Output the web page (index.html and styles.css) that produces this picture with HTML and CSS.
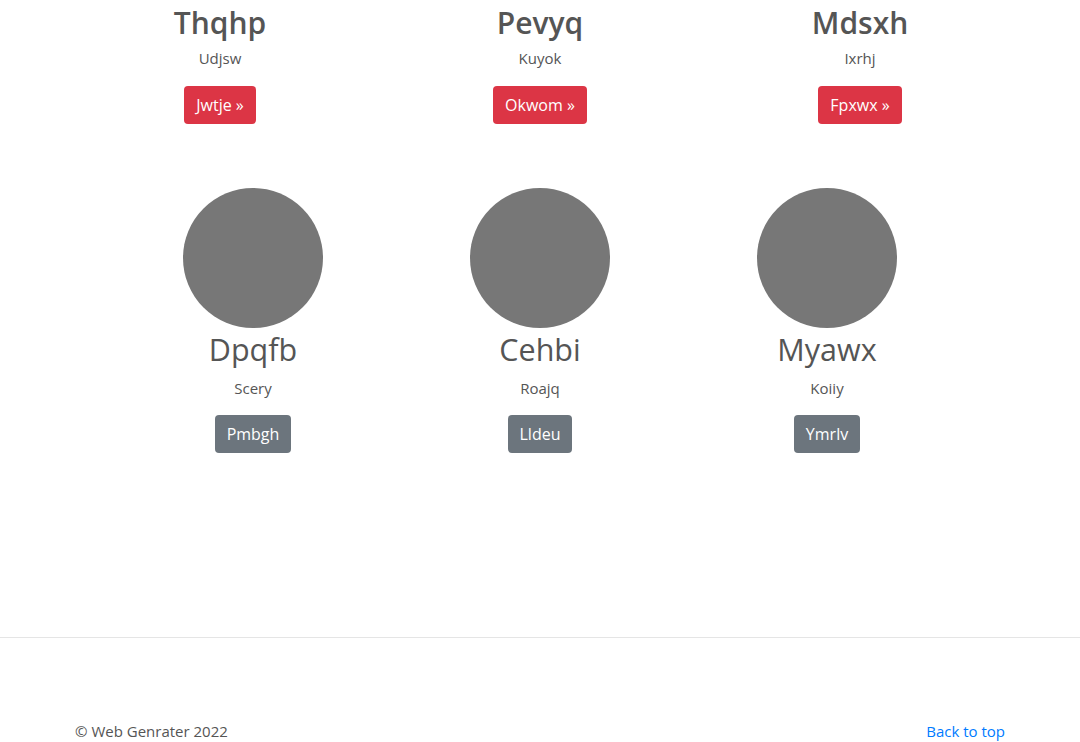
FILE: index.html
```html
<!DOCTYPE html>
<html lang="en">
<head>
<meta charset="utf-8">
<title>Web Genrater</title>
<link rel="stylesheet" href="styles.css">
</head>
<body>
<main>
  <div class="container">
    <div class="row top-row">
      <div class="col">
        <h2 class="title">Thqhp</h2>
        <p class="sub">Udjsw</p>
        <a class="btn btn-danger" href="#">Jwtje &raquo;</a>
      </div>
      <div class="col">
        <h2 class="title">Pevyq</h2>
        <p class="sub">Kuyok</p>
        <a class="btn btn-danger" href="#">Okwom &raquo;</a>
      </div>
      <div class="col">
        <h2 class="title">Mdsxh</h2>
        <p class="sub">Ixrhj</p>
        <a class="btn btn-danger" href="#">Fpxwx &raquo;</a>
      </div>
    </div>
    <div class="row marketing">
      <div class="mcol">
        <div class="avatar"></div>
        <h2 class="mtitle">Dpqfb</h2>
        <p class="sub">Scery</p>
        <a class="btn btn-secondary" href="#">Pmbgh</a>
      </div>
      <div class="mcol">
        <div class="avatar"></div>
        <h2 class="mtitle">Cehbi</h2>
        <p class="sub">Roajq</p>
        <a class="btn btn-secondary" href="#">Lldeu</a>
      </div>
      <div class="mcol">
        <div class="avatar"></div>
        <h2 class="mtitle">Myawx</h2>
        <p class="sub">Koiiy</p>
        <a class="btn btn-secondary" href="#">Ymrlv</a>
      </div>
    </div>
  </div>
  <hr class="divider">
  <footer class="footer">
    <p class="copy">&copy; Web Genrater 2022</p>
    <a class="totop" href="#">Back to top</a>
  </footer>
</main>
</body>
</html>
```
FILE: styles.css
```css
* { box-sizing: border-box; }
html, body { margin: 0; padding: 0; }
body {
  font-family: "Open Sans", "Noto Sans", "Liberation Sans", sans-serif;
  font-size: 16px;
  line-height: 1.5;
  color: #555;
  background: #fff;
}
.container {
  width: 960px;
  margin: 0 auto;
  padding: 0 15px;
}
.row { display: flex; }
.top-row { margin: 0 -15px; }
.col {
  flex: 0 0 320px;
  padding: 0 15px;
  text-align: center;
}
.title {
  margin: 0;
  padding-top: 4px;
  font-size: 30px;
  line-height: 38px;
  font-weight: 600;
  color: #555;
}
.sub {
  margin: 4px 0 16px;
  font-size: 15px;
  line-height: 24px;
}
.btn {
  display: inline-block;
  height: 38px;
  padding: 0 12px;
  font-size: 16px;
  line-height: 38px;
  color: #fff;
  text-decoration: none;
  border-radius: 4px;
}
.btn-danger { background: #dc3545; }
.btn-secondary { background: #6c757d; }
.marketing {
  justify-content: center;
  margin-top: 64px;
}
.mcol {
  flex: 0 0 287px;
  display: flex;
  flex-direction: column;
  align-items: center;
  text-align: center;
}
.avatar {
  width: 140px;
  height: 140px;
  border-radius: 50%;
  background: #777;
}
.mtitle {
  margin: 2px 0 0;
  font-size: 30.5px;
  line-height: 38px;
  font-weight: 400;
  color: #555;
}
.mcol .sub { margin: 8px 0 15px; }
.divider {
  margin: 184px 0 0;
  border: 0;
  border-top: 1px solid rgba(0,0,0,.1);
}
.footer {
  width: 960px;
  margin: 0 auto;
  padding: 81px 15px 0;
  display: flex;
  justify-content: space-between;
  align-items: center;
}
.copy { margin: 0; font-size: 15px; line-height: 24px; }
.totop { color: #007bff; text-decoration: none; font-size: 15px; line-height: 24px; }
```
